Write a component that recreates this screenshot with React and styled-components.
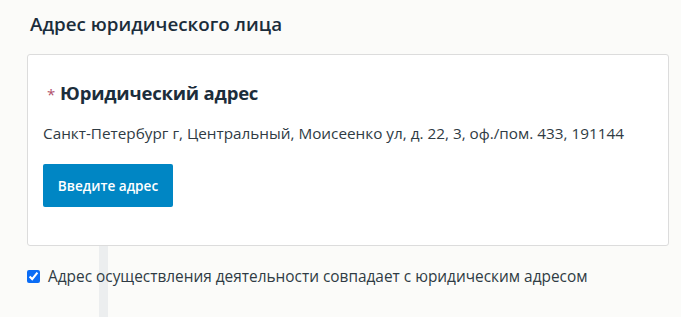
import React from "react";
import styled, { createGlobalStyle } from "styled-components";

const Global = createGlobalStyle`
  html, body { margin: 0; padding: 0; background: #fbfbf9; }
  body { font-family: "Open Sans", "Noto Sans", sans-serif; color: #2b3a45; }
`;

const Page = styled.div`
  position: relative;
  width: 681px;
  height: 317px;
  overflow: hidden;
  background: #fbfbf9;
  padding: 11px 12px 0 27px;
  box-sizing: border-box;
`;

const Rail = styled.div`
  position: absolute;
  left: 99px;
  top: 246px;
  bottom: 0;
  width: 9px;
  background: #eceeef;
  z-index: 0;
`;

const Content = styled.div`
  position: relative;
  z-index: 1;
  display: flex;
  flex-direction: column;
`;

const Title = styled.h2`
  margin: 0 0 0 3px;
  font-size: 18.8px;
  line-height: 26px;
  font-weight: 600;
  color: #1c2d3b;
`;

const Card = styled.section`
  margin-top: 17px;
  background: #fff;
  border: 1px solid #dcdcdc;
  border-radius: 3px;
  padding: 24px 15px 38px 15px;
  display: flex;
  flex-direction: column;
  align-items: flex-start;
`;

const FieldLabel = styled.h3`
  margin: 0 0 0 4px;
  font-size: 18.5px;
  line-height: 28px;
  font-weight: 700;
  letter-spacing: -0.2px;
  color: #1c2d3b;
  display: flex;
  align-items: baseline;
  gap: 5px;
`;

const Required = styled.span`
  color: #b0506a;
  font-size: 15px;
  font-weight: 400;
`;

const AddressText = styled.p`
  margin: 14px 0 0;
  font-size: 15.3px;
  line-height: 22px;
  color: #2f3b44;
`;

const PrimaryButton = styled.button`
  margin-top: 20px;
  width: 130px;
  height: 43px;
  border: none;
  border-radius: 2px;
  background: #0086c4;
  color: #fff;
  font-family: inherit;
  font-size: 13.6px;
  font-weight: 600;
  cursor: pointer;
`;

const CheckRow = styled.label`
  margin-top: 20px;
  display: flex;
  align-items: center;
  gap: 8px;
  font-size: 15.4px;
  color: #2f3b44;
`;

const Check = styled.input`
  margin: 0;
  width: 13px;
  height: 13px;
  accent-color: #0a6cf5;
`;

export default function App() {
  return (
    <>
      <Global />
      <Page>
        <Rail />
        <Content>
          <Title>Адрес юридического лица</Title>
          <Card>
            <FieldLabel>
              <Required>*</Required>
              Юридический адрес
            </FieldLabel>
            <AddressText>
              Санкт-Петербург г, Центральный, Моисеенко ул, д. 22, 3, оф./пом. 433, 191144
            </AddressText>
            <PrimaryButton>Введите адрес</PrimaryButton>
          </Card>
          <CheckRow>
            <Check type="checkbox" defaultChecked />
            Адрес осуществления деятельности совпадает с юридическим адресом
          </CheckRow>
        </Content>
      </Page>
    </>
  );
}
